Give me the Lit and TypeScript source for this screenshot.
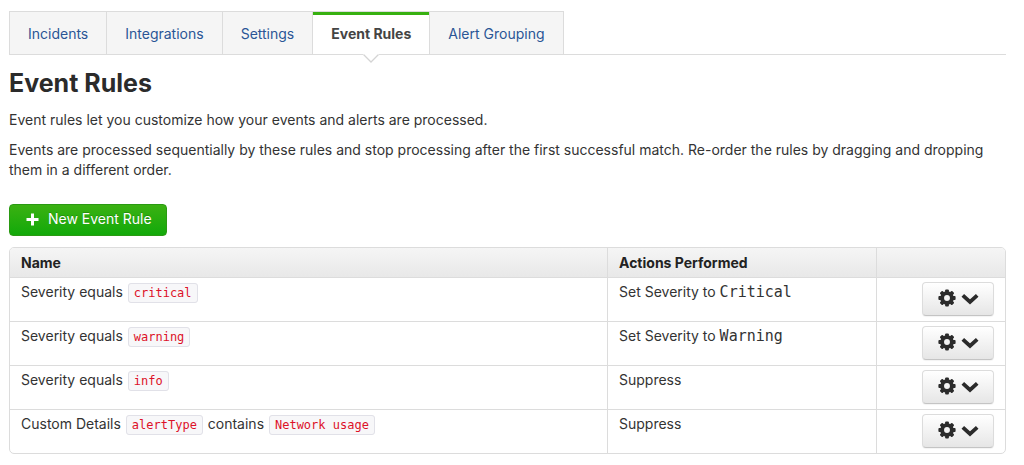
import { LitElement, html, css, svg } from "lit";
import { customElement, property } from "lit/decorators.js";
import { classMap } from "lit/directives/class-map.js";

interface Part {
  text: string;
  code?: boolean;
}

interface Rule {
  name: Part[];
  action: Part[];
}

const TABS = ["Incidents", "Integrations", "Settings", "Event Rules", "Alert Grouping"];

const severity = (value: string): Part[] => [{ text: "Severity equals " }, { text: value, code: true }];

const RULES: Rule[] = [
  { name: severity("critical"), action: [{ text: "Set Severity to " }, { text: "Critical", code: true }] },
  { name: severity("warning"), action: [{ text: "Set Severity to " }, { text: "Warning", code: true }] },
  { name: severity("info"), action: [{ text: "Suppress" }] },
  {
    name: [
      { text: "Custom Details " },
      { text: "alertType", code: true },
      { text: " contains " },
      { text: "Network usage", code: true },
    ],
    action: [{ text: "Suppress" }],
  },
];

const TEETH = [0, 45, 90, 135, 180, 225, 270, 315];

@customElement("tab-bar")
export class TabBar extends LitElement {
  @property() current = "";

  static styles = css`
    :host {
      display: block;
    }
    .tabs {
      display: flex;
      border-bottom: 1px solid #dcdcdc;
    }
    .tab {
      position: relative;
      box-sizing: border-box;
      height: 43px;
      padding: 0 18px;
      border: 1px solid #dcdcdc;
      border-width: 1px 1px 0 0;
      background: #f5f5f5;
      color: #2a5596;
      line-height: 44px;
      text-decoration: none;
      white-space: nowrap;
    }
    .tab:first-child {
      border-left-width: 1px;
    }
    .active {
      background: #fff;
      color: #444;
      font-weight: 700;
      box-shadow: inset 0 3px 0 #37b010;
    }
    .pointer {
      position: absolute;
      top: 42px;
      left: 50%;
      width: 16px;
      height: 9px;
      margin-left: -8px;
    }
  `;

  render() {
    return html`<nav class="tabs">
      ${TABS.map((name) => {
        const active = name === this.current;
        return html`<a href="#" class=${classMap({ tab: true, active })}
          >${name}${active
            ? html`<svg class="pointer" viewBox="0 0 16 9" aria-hidden="true">
                <path d="M0 0H16V1L8 8L0 1Z" fill="#fff" />
                <path d="M0.5 0.5L8 8L15.5 0.5" fill="none" stroke="#d4d4d4" stroke-width="1.3" />
              </svg>`
            : ""}</a
        >`;
      })}
    </nav>`;
  }
}

@customElement("rule-menu-button")
export class RuleMenuButton extends LitElement {
  static styles = css`
    :host {
      display: inline-block;
      vertical-align: top;
    }
    .button {
      display: flex;
      align-items: center;
      justify-content: center;
      gap: 5px;
      box-sizing: border-box;
      width: 72px;
      height: 34px;
      padding: 0 0 3px;
      border: 1px solid #dcdcdc;
      border-bottom-color: #c4c4c4;
      border-radius: 4px;
      background: linear-gradient(#fff, #e6e6e6);
      box-shadow: 0 1px 1px rgba(0, 0, 0, 0.05);
      cursor: pointer;
    }
    .gear {
      width: 18px;
      height: 18px;
    }
    .chevron {
      width: 18px;
      height: 12px;
      margin-top: 3px;
    }
  `;

  render() {
    return html`<button class="button" type="button" aria-label="Rule options">
      <svg class="gear" viewBox="0 0 18 18" aria-hidden="true">
        ${TEETH.map(
          (angle) =>
            svg`<rect x="7.1" y="0.4" width="3.8" height="4" rx="1" fill="#2b2b2b" transform="rotate(${angle} 9 9)" />`
        )}
        <circle cx="9" cy="9" r="4.9" fill="none" stroke="#2b2b2b" stroke-width="3.9" />
      </svg>
      <svg class="chevron" viewBox="0 0 18 12" aria-hidden="true">
        <path d="M1.8 2.4L9 9L16.2 2.4" fill="none" stroke="#2b2b2b" stroke-width="3.8" />
      </svg>
    </button>`;
  }
}

@customElement("rules-table")
export class RulesTable extends LitElement {
  @property({ attribute: false }) rules: Rule[] = [];

  static styles = css`
    :host {
      display: block;
    }
    .table {
      width: 100%;
      table-layout: fixed;
      border: 1px solid #dcdcdc;
      border-radius: 5px;
      border-collapse: separate;
      border-spacing: 0;
      overflow: hidden;
    }
    .head,
    .cell {
      box-sizing: border-box;
    }
    .name {
      width: 60%;
    }
    .action {
      width: 27%;
    }
    .head {
      height: 29px;
      padding: 0 11px;
      background: linear-gradient(#f5f5f5, #e8e8e8);
      color: #222;
      text-align: left;
      line-height: 28px;
      font-weight: 700;
    }
    .cell {
      height: 44px;
      padding: 4px 11px;
      border-top: 1px solid #dcdcdc;
      vertical-align: top;
    }
    .head + .head,
    .cell + .cell {
      border-left: 1px solid #dcdcdc;
    }
    .menu {
      text-align: right;
    }
    .pill {
      margin: 0 1px;
      padding: 2px 5px;
      border: 1px solid #e1e1e8;
      border-radius: 3px;
      background: #f7f7f9;
      color: #dd1128;
      font: 12px/16px "DejaVu Sans Mono", monospace;
      white-space: nowrap;
    }
    .value {
      font: 15px/20px "DejaVu Sans Mono", monospace;
    }
  `;

  private parts(parts: Part[], style: string) {
    return parts.map((part) => (part.code ? html`<code class=${style}>${part.text}</code>` : part.text));
  }

  render() {
    return html`<table class="table">
      <thead>
        <tr>
          <th class="head name" scope="col">Name</th>
          <th class="head action" scope="col">Actions Performed</th>
          <th class="head" scope="col"></th>
        </tr>
      </thead>
      <tbody>
        ${this.rules.map(
          (rule) => html`<tr>
            <td class="cell">${this.parts(rule.name, "pill")}</td>
            <td class="cell">${this.parts(rule.action, "value")}</td>
            <td class="cell menu"><rule-menu-button></rule-menu-button></td>
          </tr>`
        )}
      </tbody>
    </table>`;
  }
}

@customElement("app-root")
export class AppRoot extends LitElement {
  static styles = css`
    :host {
      display: block;
      padding: 11px 18px 11px 9px;
      background: #fff;
      color: #333;
      font: 14px/20px Inter, "Liberation Sans", sans-serif;
    }
    .title {
      margin: 8px 0 7px;
      color: #2b2b2b;
      font-size: 25px;
      font-weight: 700;
      line-height: 40px;
    }
    .text {
      margin: 0 0 10px;
    }
    .new-rule {
      display: flex;
      align-items: center;
      gap: 9px;
      box-sizing: border-box;
      height: 32px;
      margin: 24px 0 11px;
      padding: 0 14px 2px 16px;
      border: 1px solid #2a9a12;
      border-radius: 4px;
      background: linear-gradient(#3bb112, #12a90a);
      color: #fff;
      font: inherit;
      text-shadow: 0 -1px 0 rgba(0, 0, 0, 0.2);
      cursor: pointer;
    }
    .plus {
      width: 13px;
      height: 13px;
    }
  `;

  render() {
    return html`
      <tab-bar current="Event Rules"></tab-bar>
      <main>
        <h1 class="title">Event Rules</h1>
        <p class="text">Event rules let you customize how your events and alerts are processed.</p>
        <p class="text">
          Events are processed sequentially by these rules and stop processing after the first successful match.
          Re-order the rules by dragging and dropping them in a different order.
        </p>
        <button class="new-rule" type="button">
          <svg class="plus" viewBox="0 0 13 13" aria-hidden="true">
            <path d="M6.5 0.5V12.5M0.5 6.5H12.5" fill="none" stroke="#fff" stroke-width="3" />
          </svg>
          New Event Rule
        </button>
        <rules-table .rules=${RULES}></rules-table>
      </main>
    `;
  }
}
